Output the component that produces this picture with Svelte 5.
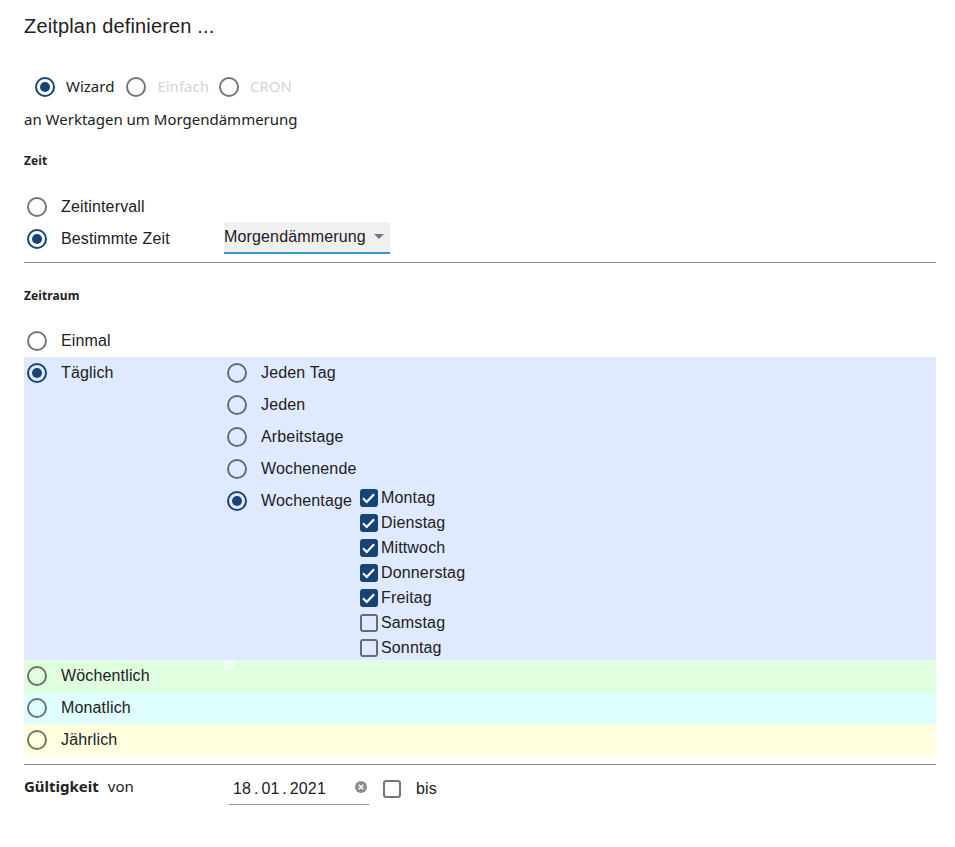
<script>
    let modes = [
        {label: "Wizard", on: true},
        {label: "Einfach", on: false},
        {label: "CRON", on: false}
    ];
    let dailyOptions = ["Jeden Tag", "Jeden", "Arbeitstage", "Wochenende"];
    let weekdays = [
        {name: "Montag", on: true},
        {name: "Dienstag", on: true},
        {name: "Mittwoch", on: true},
        {name: "Donnerstag", on: true},
        {name: "Freitag", on: true},
        {name: "Samstag", on: false},
        {name: "Sonntag", on: false}
    ];
</script>

{#snippet radio(on)}
    <span class="radio" class:on={on}></span>
{/snippet}

{#snippet checkbox(on)}
    <span class="check" class:on={on}>
        {#if on}
            <svg viewBox="0 0 18 18" width="18" height="18"><path d="M3 9.3l3.7 3.7 7.4-7.8" fill="none" stroke="#fff" stroke-width="2.2"/></svg>
        {/if}
    </span>
{/snippet}

<div class="page">
    <h1>Zeitplan definieren ...</h1>

    <div class="modes">
        {#each modes as mode}
            <div class="mode" class:disabled={!mode.on}>
                {@render radio(mode.on)}
                <span>{mode.label}</span>
            </div>
        {/each}
    </div>
    <div class="summary">an Werktagen um Morgendämmerung</div>

    <h2 class="time-head">Zeit</h2>
    <div class="row">{@render radio(false)}<span class="label">Zeitintervall</span></div>
    <div class="row split">
        <div class="cell">{@render radio(true)}<span class="label">Bestimmte Zeit</span></div>
        <div class="select">
            <span>Morgendämmerung</span>
            <span class="caret"></span>
        </div>
    </div>
    <hr class="first" />

    <h2 class="range-head">Zeitraum</h2>
    <div class="row">{@render radio(false)}<span class="label">Einmal</span></div>

    <div class="daily">
        <div class="cell top">{@render radio(true)}<span class="label">Täglich</span></div>
        <div class="options">
            {#each dailyOptions as option}
                <div class="row">{@render radio(false)}<span class="label">{option}</span></div>
            {/each}
            <div class="weekdays">
                <div class="row">{@render radio(true)}<span class="label">Wochentage</span></div>
                <div class="days">
                    {#each weekdays as day}
                        <div class="day">{@render checkbox(day.on)}<span>{day.name}</span></div>
                    {/each}
                </div>
            </div>
        </div>
    </div>
    <div class="row weekly">
        <span class="speck"></span>
        {@render radio(false)}<span class="label">Wöchentlich</span>
    </div>
    <div class="row monthly">{@render radio(false)}<span class="label">Monatlich</span></div>
    <div class="row yearly">{@render radio(false)}<span class="label">Jährlich</span></div>
    <hr class="second" />

    <div class="validity">
        <div class="validity-label"><b>Gültigkeit</b><span>von</span></div>
        <div class="date">
            <span>18 . 01 . 2021</span>
            <svg class="clear" viewBox="0 0 12 12" width="12" height="12">
                <circle cx="6" cy="6" r="6" fill="#8c8c8c"/>
                <path d="M3.8 3.8l4.4 4.4M8.2 3.8l-4.4 4.4" stroke="#fff" stroke-width="1.6"/>
            </svg>
        </div>
        {@render checkbox(false)}
        <span class="until">bis</span>
    </div>
</div>

<style>
    :global(body){
        background: #fff;
    }
    .page{
        width: 912px;
        height: 847px;
        padding-left: 24px;
        font-family: "Liberation Sans", Arial, sans-serif;
        font-size: 16px;
        letter-spacing: 0.15px;
        color: #212121;
        overflow: hidden;
    }
    h1{
        margin: 0;
        padding-top: 15px;
        font-size: 20px;
        line-height: 23px;
        font-weight: 400;
        letter-spacing: 0.16px;
    }
    h2{
        margin: 0;
        font-family: "Noto Sans", sans-serif;
        font-size: 12px;
        line-height: 16px;
        font-weight: 700;
        letter-spacing: 0.1px;
    }
    .modes{
        display: flex;
        align-items: center;
        margin-top: 33px;
        padding-left: 11px;
        height: 32px;
    }
    .mode{
        display: flex;
        align-items: center;
        gap: 11px;
        margin-right: 11px;
        font-family: "Noto Sans", sans-serif;
        font-size: 15px;
        letter-spacing: 0;
    }
    .mode:first-child{
        margin-right: 12px;
    }
    .mode:nth-child(2){
        margin-right: 10px;
    }
    .mode span:last-child{
        margin-bottom: 2px;
    }
    .mode.disabled{
        color: #d4d4d4;
    }
    .summary{
        margin-top: 6px;
        font-family: "Noto Sans", sans-serif;
        font-size: 15px;
        line-height: 20px;
        letter-spacing: 0;
    }
    .time-head{
        margin-top: 24px;
        margin-bottom: 22px;
    }
    .range-head{
        margin-top: 25px;
        margin-bottom: 21px;
    }
    .row{
        display: flex;
        align-items: center;
        height: 32px;
        padding-left: 3px;
        position: relative;
    }
    .split{
        padding-left: 0;
    }
    .cell{
        display: flex;
        align-items: center;
        width: 200px;
        padding-left: 3px;
        box-sizing: border-box;
        height: 32px;
    }
    .label{
        margin-left: 14px;
    }
    .radio{
        display: block;
        flex: none;
        box-sizing: border-box;
        width: 20px;
        height: 20px;
        border: 2px solid rgba(0, 0, 0, 0.54);
        border-radius: 50%;
        position: relative;
    }
    .radio.on{
        border-color: #174476;
    }
    .radio.on::after{
        content: "";
        display: block;
        width: 10px;
        height: 10px;
        margin: 3px;
        border-radius: 50%;
        background: #174476;
    }
    .select{
        display: flex;
        align-items: center;
        box-sizing: border-box;
        width: 166px;
        height: 32px;
        margin-bottom: 2px;
        background: #f0f0f0;
        border-bottom: 2px solid #3399cc;
        padding-bottom: 1px;
    }
    .caret{
        width: 0;
        height: 0;
        margin-left: 8px;
        border-left: 5px solid transparent;
        border-right: 5px solid transparent;
        border-top: 5px solid #757575;
    }
    hr{
        margin: 0;
        border: 0;
        height: 1px;
        background: #8a8a8a;
    }
    .first{
        margin-top: 7px;
    }
    .second{
        margin-top: 8px;
    }
    .daily{
        display: flex;
        align-items: flex-start;
        background: #dfe9ff;
    }
    .options{
        flex: 1;
    }
    .weekdays{
        display: flex;
        align-items: flex-start;
    }
    .weekdays .row{
        box-sizing: border-box;
        width: 136px;
    }
    .day{
        display: flex;
        align-items: center;
        gap: 3px;
        height: 25px;
    }
    .check{
        display: block;
        flex: none;
        box-sizing: border-box;
        width: 18px;
        height: 18px;
        border: 2px solid rgba(0, 0, 0, 0.54);
        border-radius: 3px;
    }
    .check.on{
        border: 0;
        background: #174476;
    }
    .check svg{
        display: block;
    }
    .weekly{
        background: #dfffdf;
    }
    .monthly{
        background: #dfffff;
    }
    .yearly{
        background: #ffffdf;
    }
    .speck{
        position: absolute;
        left: 200px;
        top: 0;
        width: 10px;
        height: 10px;
        background: #efffef;
    }
    .validity{
        display: flex;
        align-items: center;
        height: 46px;
    }
    .validity-label{
        display: flex;
        gap: 9px;
        width: 205px;
        font-family: "Noto Sans", sans-serif;
        font-size: 15px;
        letter-spacing: 0;
        margin-top: -4px;
    }
    .date{
        display: flex;
        align-items: center;
        justify-content: space-between;
        box-sizing: border-box;
        width: 140px;
        height: 32px;
        margin-top: 2px;
        padding: 0 2px 0 4px;
        border-bottom: 1px solid #949494;
        word-spacing: -1.75px;
    }
    .clear{
        margin-top: -3px;
    }
    .validity .check{
        margin-left: 14px;
        margin-top: 2px;
    }
    .until{
        margin-left: 15px;
        margin-top: 2px;
    }
</style>
